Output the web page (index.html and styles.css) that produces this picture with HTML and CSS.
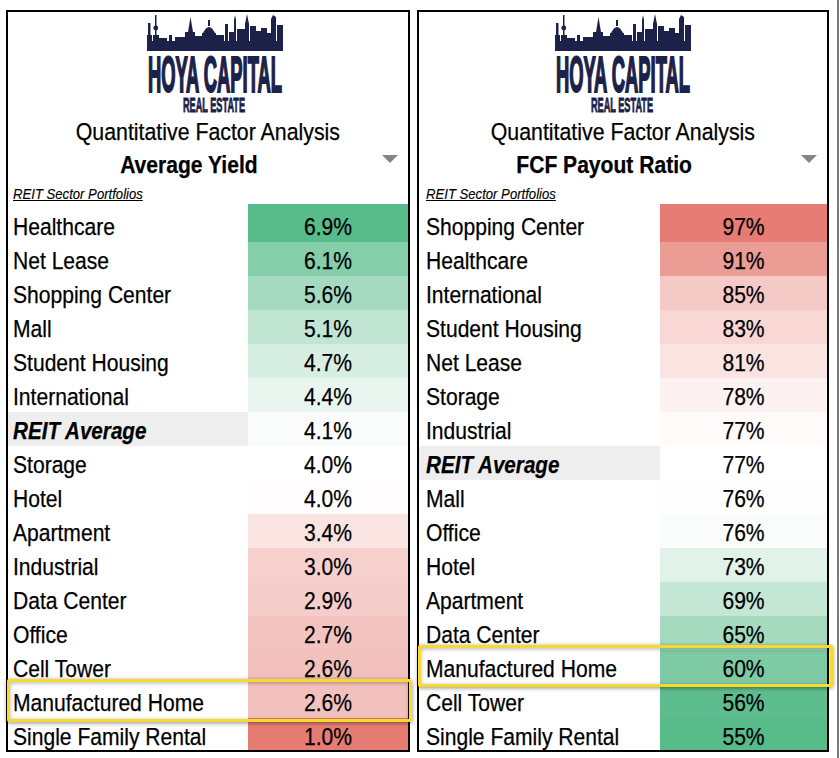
FILE: index.html
```html
<!DOCTYPE html>
<html lang="en">
<head>
<meta charset="utf-8">
<title>Quantitative Factor Analysis</title>
<link rel="stylesheet" href="styles.css">
</head>
<body>
<div class="page">
  <section class="panel panel-yield">
    <header class="head">
      <div class="logo">
        <svg class="logo-svg" width="136" height="101" viewBox="0 0 136 101" aria-label="Hoya Capital Real Estate">
          <g class="sky">
            <rect x="0" y="27" width="136" height="10"/>
            <rect x="1" y="9" width="2.5" height="18"/><rect x="0" y="21" width="5" height="6"/>
            <rect x="8" y="1" width="1.5" height="26"/><circle cx="8.75" cy="14" r="2.4"/><rect x="6" y="21" width="6" height="6"/>
            <rect x="12" y="24" width="8" height="3"/><rect x="22" y="21" width="3" height="6"/><rect x="28" y="23" width="10" height="4"/>
            <rect x="38" y="18" width="10" height="9"/><polygon points="41,18 43.5,3 46,18"/>
            <rect x="48" y="22" width="8" height="5"/>
            <rect x="55" y="19" width="14" height="8"/><path d="M56 19 Q62 7 68 19 Z"/><rect x="61" y="6" width="2" height="6"/>
            <rect x="69" y="21" width="8" height="6"/>
            <rect x="78" y="10" width="3" height="17"/><rect x="82" y="18" width="5" height="9"/>
            <rect x="87" y="6" width="2" height="21"/><polygon points="87,6 88,1 89,6"/>
            <rect x="90" y="15" width="8" height="12"/>
            <polygon points="98,27 98,10 100,0 102,10 102,27"/>
            <rect x="103" y="12" width="6" height="15"/><rect x="109" y="17" width="5" height="10"/><rect x="114" y="14" width="6" height="13"/><rect x="120" y="19" width="4" height="8"/>
            <polygon points="124,27 124,5 126,1 129,3 129,27"/>
            <rect x="130" y="11" width="6" height="16"/>
          </g>
          <text class="logo-big" x="1" y="78" textLength="134" lengthAdjust="spacingAndGlyphs">HOYA CAPITAL</text>
          <text class="logo-small" x="36" y="98" textLength="62" lengthAdjust="spacingAndGlyphs">REAL ESTATE</text>
        </svg>
      </div>
      <div class="qfa"><span class="sx sx-q">Quantitative Factor Analysis</span></div>
      <div class="title-row">
        <div class="title"><span class="sx">Average Yield</span></div>
        <span class="caret"></span>
      </div>
      <div class="sub"><span class="sx sx-l sx-s">REIT Sector Portfolios</span></div>
    </header>
    <div class="table">
      <div class="label first"><span class="sx sx-l">Healthcare</span></div><div class="val first" style="background:#57bb8a"><span class="sx">6.9%</span></div>
      <div class="label"><span class="sx sx-l">Net Lease</span></div><div class="val" style="background:#85ceaa"><span class="sx">6.1%</span></div>
      <div class="label"><span class="sx sx-l">Shopping Center</span></div><div class="val" style="background:#a5dac0"><span class="sx">5.6%</span></div>
      <div class="label"><span class="sx sx-l">Mall</span></div><div class="val" style="background:#c0e6d3"><span class="sx">5.1%</span></div>
      <div class="label"><span class="sx sx-l">Student Housing</span></div><div class="val" style="background:#d7efe3"><span class="sx">4.7%</span></div>
      <div class="label"><span class="sx sx-l">International</span></div><div class="val" style="background:#e8f6ef"><span class="sx">4.4%</span></div>
      <div class="label avg"><span class="sx sx-l">REIT Average</span></div><div class="val" style="background:#f9fcfa"><span class="sx">4.1%</span></div>
      <div class="label"><span class="sx sx-l">Storage</span></div><div class="val" style="background:#ffffff"><span class="sx">4.0%</span></div>
      <div class="label"><span class="sx sx-l">Hotel</span></div><div class="val" style="background:#fefcfc"><span class="sx">4.0%</span></div>
      <div class="label"><span class="sx sx-l">Apartment</span></div><div class="val" style="background:#fae4e2"><span class="sx">3.4%</span></div>
      <div class="label"><span class="sx sx-l">Industrial</span></div><div class="val" style="background:#f6d0cd"><span class="sx">3.0%</span></div>
      <div class="label"><span class="sx sx-l">Data Center</span></div><div class="val" style="background:#f5cdca"><span class="sx">2.9%</span></div>
      <div class="label"><span class="sx sx-l">Office</span></div><div class="val" style="background:#f3c3bf"><span class="sx">2.7%</span></div>
      <div class="label"><span class="sx sx-l">Cell Tower</span></div><div class="val" style="background:#f3c1bd"><span class="sx">2.6%</span></div>
      <div class="label"><span class="sx sx-l">Manufactured Home</span></div><div class="val" style="background:#f3c1bd"><span class="sx">2.6%</span></div>
      <div class="label last"><span class="sx sx-l">Single Family Rental</span></div><div class="val last" style="background:#e67c73"><span class="sx">1.0%</span></div>
    </div>
  </section>

  <section class="panel panel-fcf">
    <header class="head">
      <div class="logo">
        <svg class="logo-svg" width="136" height="101" viewBox="0 0 136 101" aria-label="Hoya Capital Real Estate">
          <g class="sky">
            <rect x="0" y="27" width="136" height="10"/>
            <rect x="1" y="9" width="2.5" height="18"/><rect x="0" y="21" width="5" height="6"/>
            <rect x="8" y="1" width="1.5" height="26"/><circle cx="8.75" cy="14" r="2.4"/><rect x="6" y="21" width="6" height="6"/>
            <rect x="12" y="24" width="8" height="3"/><rect x="22" y="21" width="3" height="6"/><rect x="28" y="23" width="10" height="4"/>
            <rect x="38" y="18" width="10" height="9"/><polygon points="41,18 43.5,3 46,18"/>
            <rect x="48" y="22" width="8" height="5"/>
            <rect x="55" y="19" width="14" height="8"/><path d="M56 19 Q62 7 68 19 Z"/><rect x="61" y="6" width="2" height="6"/>
            <rect x="69" y="21" width="8" height="6"/>
            <rect x="78" y="10" width="3" height="17"/><rect x="82" y="18" width="5" height="9"/>
            <rect x="87" y="6" width="2" height="21"/><polygon points="87,6 88,1 89,6"/>
            <rect x="90" y="15" width="8" height="12"/>
            <polygon points="98,27 98,10 100,0 102,10 102,27"/>
            <rect x="103" y="12" width="6" height="15"/><rect x="109" y="17" width="5" height="10"/><rect x="114" y="14" width="6" height="13"/><rect x="120" y="19" width="4" height="8"/>
            <polygon points="124,27 124,5 126,1 129,3 129,27"/>
            <rect x="130" y="11" width="6" height="16"/>
          </g>
          <text class="logo-big" x="1" y="78" textLength="134" lengthAdjust="spacingAndGlyphs">HOYA CAPITAL</text>
          <text class="logo-small" x="36" y="98" textLength="62" lengthAdjust="spacingAndGlyphs">REAL ESTATE</text>
        </svg>
      </div>
      <div class="qfa"><span class="sx sx-q">Quantitative Factor Analysis</span></div>
      <div class="title-row">
        <div class="title"><span class="sx">FCF Payout Ratio</span></div>
        <span class="caret"></span>
      </div>
      <div class="sub"><span class="sx sx-l sx-s">REIT Sector Portfolios</span></div>
    </header>
    <div class="table">
      <div class="label first"><span class="sx sx-l">Shopping Center</span></div><div class="val first" style="background:#e67c73"><span class="sx">97%</span></div>
      <div class="label"><span class="sx sx-l">Healthcare</span></div><div class="val" style="background:#eb9c95"><span class="sx">91%</span></div>
      <div class="label"><span class="sx sx-l">International</span></div><div class="val" style="background:#f5c9c5"><span class="sx">85%</span></div>
      <div class="label"><span class="sx sx-l">Student Housing</span></div><div class="val" style="background:#f8d7d4"><span class="sx">83%</span></div>
      <div class="label"><span class="sx sx-l">Net Lease</span></div><div class="val" style="background:#fae3e1"><span class="sx">81%</span></div>
      <div class="label"><span class="sx sx-l">Storage</span></div><div class="val" style="background:#fdf2f1"><span class="sx">78%</span></div>
      <div class="label"><span class="sx sx-l">Industrial</span></div><div class="val" style="background:#fffbfb"><span class="sx">77%</span></div>
      <div class="label avg"><span class="sx sx-l">REIT Average</span></div><div class="val" style="background:#ffffff"><span class="sx">77%</span></div>
      <div class="label"><span class="sx sx-l">Mall</span></div><div class="val" style="background:#fefefe"><span class="sx">76%</span></div>
      <div class="label"><span class="sx sx-l">Office</span></div><div class="val" style="background:#f9fcfa"><span class="sx">76%</span></div>
      <div class="label"><span class="sx sx-l">Hotel</span></div><div class="val" style="background:#e1f2e9"><span class="sx">73%</span></div>
      <div class="label"><span class="sx sx-l">Apartment</span></div><div class="val" style="background:#c4e7d5"><span class="sx">69%</span></div>
      <div class="label"><span class="sx sx-l">Data Center</span></div><div class="val" style="background:#a6dabf"><span class="sx">65%</span></div>
      <div class="label"><span class="sx sx-l">Manufactured Home</span></div><div class="val" style="background:#7ecaa5"><span class="sx">60%</span></div>
      <div class="label"><span class="sx sx-l">Cell Tower</span></div><div class="val" style="background:#5dbd8e"><span class="sx">56%</span></div>
      <div class="label last"><span class="sx sx-l">Single Family Rental</span></div><div class="val last" style="background:#57bb8a"><span class="sx">55%</span></div>
    </div>
  </section>

  <div class="edge"></div>

  <div class="hl hl-left"></div>
  <div class="hl hl-right"></div>
</div>
</body>
</html>
```

FILE: styles.css
```css
* { box-sizing: border-box; }

html, body {
  margin: 0;
  padding: 0;
  background: #ffffff;
}

body {
  font-family: "Liberation Sans", Arial, sans-serif;
  color: #000000;
  -webkit-text-stroke: 0.25px #000000;
}

.page {
  position: relative;
  display: flex;
  align-items: flex-start;
  gap: 7px;
  width: 840px;
  height: 758px;
  padding: 10px 0 0 6px;
  overflow: hidden;
}

.panel {
  border: 2px solid #000000;
  display: flex;
  flex-direction: column;
  background: #ffffff;
}

.panel-yield { width: 404px; }
.panel-fcf { width: 412px; }

.edge {
  align-self: stretch;
  width: 2px;
  margin: -10px 0 0 1px;
  background: #7a7a7a;
}

/* header */
.logo {
  height: 107px;
  display: flex;
  justify-content: center;
  align-items: flex-start;
}

.panel-yield .logo { padding-left: 14px; }

.logo-svg {
  margin-top: 2px;
  display: block;
  overflow: visible;
  -webkit-text-stroke: 0;
}

.sky { fill: #1c2149; }

.logo-big {
  font-family: "Liberation Sans Narrow", "Liberation Sans", Arial, sans-serif;
  font-weight: bold;
  font-size: 50px;
  fill: #1c2149;
  stroke: #1c2149;
  stroke-width: 2.2px;
}

.logo-small {
  font-family: "Liberation Sans Narrow", "Liberation Sans", Arial, sans-serif;
  font-weight: bold;
  font-size: 21px;
  fill: #1c2149;
  stroke: #1c2149;
  stroke-width: 0.9px;
}

.qfa {
  height: 26px;
  line-height: 26px;
  font-size: 24.5px;
  text-align: center;
  white-space: nowrap;
}

.title-row {
  height: 39px;
  display: flex;
  align-items: flex-start;
}

.title {
  flex: 1;
  text-align: center;
  font-weight: bold;
  font-size: 24.5px;
  line-height: 39px;
  white-space: nowrap;
}

.caret {
  width: 0;
  height: 0;
  border-left: 8px solid transparent;
  border-right: 8px solid transparent;
  border-top: 8px solid #858585;
  margin: 10px 10px 0 12px;
}

.sub {
  height: 20px;
  line-height: 20px;
  font-size: 15px;
  font-style: italic;
  padding-left: 5px;
  white-space: nowrap;
  -webkit-text-stroke: 0.15px #000000;
}

.sub .sx { text-decoration: underline; }

.panel-fcf .sub { padding-left: 7px; }

/* horizontally condensed text, as in the reference */
.sx {
  display: inline-block;
  transform: scaleX(0.86);
  transform-origin: 50% 50%;
}

.sx-l { transform-origin: 0 50%; }
.sx-q { transform: scaleX(0.87); }
.sx-s { transform: scaleX(0.875); }

/* table */
.table {
  display: grid;
  grid-template-columns: 240px 160px;
}

.panel-fcf .table { grid-template-columns: 241px 167px; }

.label,
.val {
  height: 34px;
  padding-top: 2px;
  line-height: 34px;
  font-size: 24.5px;
  white-space: nowrap;
  overflow: hidden;
}

.label { padding-left: 5px; }
.panel-fcf .label { padding-left: 7px; }

.val { text-align: center; }

.first {
  height: 38px;
  padding-top: 6px;
}

.last { height: 32px; }

.avg {
  background: #eeeeee;
  font-weight: bold;
  font-style: italic;
  font-size: 24px;
}

/* yellow highlight boxes drawn over the table */
.hl {
  position: absolute;
  border: 3px solid #f8d92e;
  border-radius: 2px;
  box-shadow: 0 1px 4px rgba(0, 0, 0, 0.45), inset 0 1px 4px rgba(0, 0, 0, 0.3);
  pointer-events: none;
}

.hl-left {
  left: 7px;
  top: 679px;
  width: 405px;
  height: 43px;
}

.hl-right {
  left: 418px;
  top: 645px;
  width: 415px;
  height: 42px;
}
```
